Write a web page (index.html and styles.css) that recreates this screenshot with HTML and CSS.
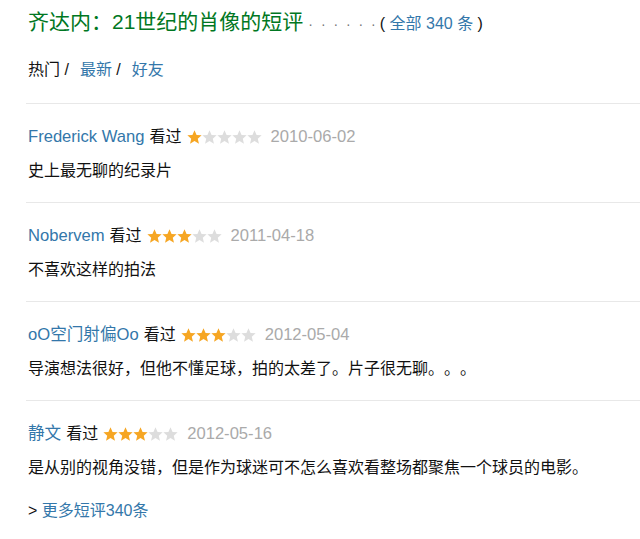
FILE: index.html
```html
<!DOCTYPE html>
<html lang="zh">
<head>
<meta charset="utf-8">
<title>短评</title>
<link rel="stylesheet" href="styles.css">
</head>
<body>
<svg width="0" height="0" class="defs">
  <defs>
    <symbol id="star" viewBox="1 1.2 22 21">
      <path d="M12 1.5l3.1 7.1 7.6.6-5.8 5 1.8 7.5L12 17.7l-6.7 4 1.8-7.5-5.8-5 7.6-.6z"/>
    </symbol>
  </defs>
</svg>
<div class="page">
  <h2 class="title">齐达内：21世纪的肖像的短评<span class="dots">· · · · · ·</span><span class="all">( <a href="#">全部 340 条</a> )</span></h2>
  <div class="tabs">热门 /<a href="#">最新</a> /<a href="#">好友</a></div>
  <ul class="comments">
    <li class="item">
      <div class="meta"><a class="name" href="#">Frederick Wang</a><span class="seen">看过</span>
        <span class="stars"><svg class="on"><use href="#star"/></svg><svg><use href="#star"/></svg><svg><use href="#star"/></svg><svg><use href="#star"/></svg><svg><use href="#star"/></svg></span>
        <span class="date">2010-06-02</span></div>
      <p class="text">史上最无聊的纪录片</p>
    </li>
    <li class="item">
      <div class="meta"><a class="name" href="#">Nobervem</a><span class="seen">看过</span>
        <span class="stars"><svg class="on"><use href="#star"/></svg><svg class="on"><use href="#star"/></svg><svg class="on"><use href="#star"/></svg><svg><use href="#star"/></svg><svg><use href="#star"/></svg></span>
        <span class="date">2011-04-18</span></div>
      <p class="text">不喜欢这样的拍法</p>
    </li>
    <li class="item">
      <div class="meta"><a class="name" href="#">oO空门射偏Oo</a><span class="seen">看过</span>
        <span class="stars"><svg class="on"><use href="#star"/></svg><svg class="on"><use href="#star"/></svg><svg class="on"><use href="#star"/></svg><svg><use href="#star"/></svg><svg><use href="#star"/></svg></span>
        <span class="date">2012-05-04</span></div>
      <p class="text">导演想法很好，但他不懂足球，拍的太差了。片子很无聊。。。</p>
    </li>
    <li class="item">
      <div class="meta"><a class="name" href="#">静文</a><span class="seen">看过</span>
        <span class="stars"><svg class="on"><use href="#star"/></svg><svg class="on"><use href="#star"/></svg><svg class="on"><use href="#star"/></svg><svg><use href="#star"/></svg><svg><use href="#star"/></svg></span>
        <span class="date">2012-05-16</span></div>
      <p class="text">是从别的视角没错，但是作为球迷可不怎么喜欢看整场都聚焦一个球员的电影。</p>
    </li>
  </ul>
  <div class="more">&gt; <a href="#">更多短评340条</a></div>
</div>
</body>
</html>
```

FILE: styles.css
```css
html, body {
  margin: 0;
  padding: 0;
  background: #fff;
}
body {
  font-family: "Liberation Sans", "Noto Sans CJK SC", sans-serif;
  color: #111;
  font-size: 16px;
  text-spacing-trim: space-all;
}
.defs {
  position: absolute;
}
a {
  color: #3377aa;
  text-decoration: none;
}
.page {
  padding-left: 26px;
}
.title {
  margin: 7px 0 0 2px;
  font-size: 21px;
  font-weight: normal;
  line-height: 30px;
  color: #007722;
  display: flex;
  align-items: baseline;
  white-space: nowrap;
}
.dots {
  color: #777;
  font-size: 14px;
  margin-left: 5px;
  letter-spacing: 2px;
}
.all {
  font-size: 16px;
  color: #111;
  margin-left: 2px;
}
.tabs {
  margin: 19px 0 0 2px;
  line-height: 24px;
  font-size: 16px;
}
.tabs a {
  margin-left: 11px;
}
.comments {
  list-style: none;
  margin: 21px 0 0 0;
  padding: 0;
}
.item {
  border-top: 1px solid #e8e8e8;
  padding: 21px 0 19px 2px;
}
.meta {
  display: flex;
  align-items: center;
  line-height: 24px;
  height: 24px;
  white-space: nowrap;
}
.name {
  font-size: 16.6px;
}
.seen {
  margin-left: 5px;
}
.stars {
  display: flex;
  margin-left: 5px;
}
.stars svg {
  width: 15px;
  height: 14px;
  fill: #dddddd;
}
.stars svg.on {
  fill: #f6a623;
}
.date {
  color: #aaaaaa;
  font-size: 16.6px;
  margin-left: 9px;
}
.text {
  margin: 10px 0 0 0;
  line-height: 24px;
}
.more {
  margin-left: 2px;
  line-height: 24px;
}
```
